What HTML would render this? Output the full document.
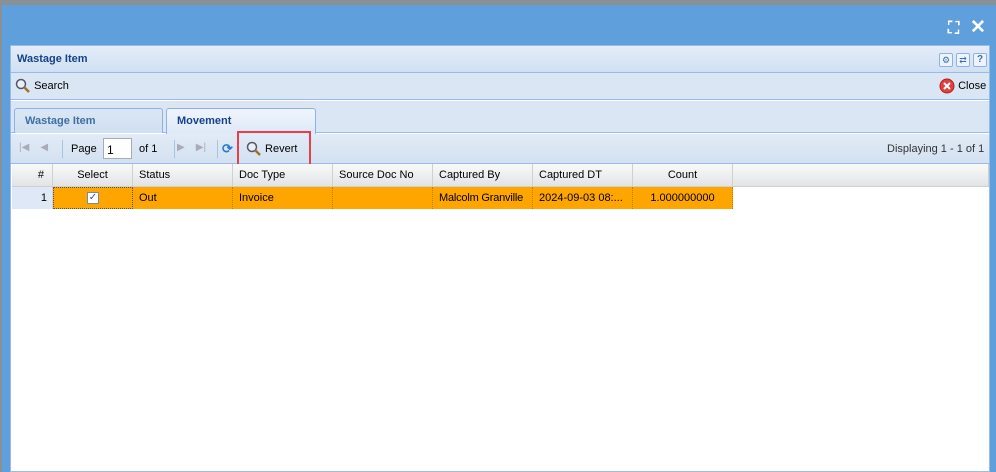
<!DOCTYPE html>
<html><head><style>
*{margin:0;padding:0;box-sizing:border-box}
body{width:996px;height:472px;overflow:hidden;background:#8a9098;font-family:"Liberation Sans",sans-serif;font-size:11px;position:relative}
.abs{position:absolute}
.win{left:2px;top:5px;width:994px;height:467px;background:#5fa0dc}
.inner{left:10px;top:45px;width:980px;height:427px;background:#fff;border:1px solid #99bbe8}
.hdr{left:0;top:0;width:978px;height:27px;background:linear-gradient(#e4edf8,#d0e0f3);border-bottom:1px solid #99bbe8;color:#15428b;font-weight:bold;font-size:11px;padding:7px 6px}
.tb{left:0;top:27px;width:978px;height:27px;background:#dae6f4;border-bottom:1px solid #99bbe8}
.tabs{left:0;top:55px;width:978px;height:32px;background:#dae6f4;border-bottom:1px solid #99bbe8}
.tab{top:7px;height:25px;border:1px solid #8db2e3;border-bottom:none;border-radius:3px 3px 0 0;font-weight:bold;color:#15428b;padding:6px 10px}
.pg{left:0;top:88px;width:978px;height:30px;background:linear-gradient(#e2ebf6,#d3e1f1);border-bottom:1px solid #99bbe8}
.gh{top:118px;height:23px;background:linear-gradient(#f9f9f9,#e3e4e6);border-right:1px solid #d0d0d0;border-bottom:1px solid #d0d0d0;padding:5px 6px;color:#000;white-space:nowrap}
.gr{top:141px;height:22px;background:#ffa500;border-right:1px dotted #c08000;padding:5px 6px;color:#000;white-space:nowrap;overflow:hidden}
.ic{display:inline-block;vertical-align:middle}
</style></head><body>
<div class="abs win"></div>
<div class="abs" style="left:948px;top:20px;color:#fff;font-size:16px;font-weight:bold">⛶</div>
<div class="abs" style="left:970px;top:16px;color:#fff;font-size:19px;font-weight:bold">✕</div>
<div class="abs inner">
 <div class="abs hdr">Wastage Item</div>
 <div class="abs" style="left:928px;top:7px;display:flex;gap:3px">
  <span style="width:14px;height:14px;border:1px solid #8db2e3;border-radius:2px;background:#eef4fb;font-size:9px;color:#3a6fb5;text-align:center;line-height:12px">⚙</span>
  <span style="width:14px;height:14px;border:1px solid #8db2e3;border-radius:2px;background:#eef4fb;font-size:9px;color:#3a6fb5;text-align:center;line-height:12px">⇄</span>
  <span style="width:14px;height:14px;border:1px solid #8db2e3;border-radius:2px;background:#eef4fb;font-size:10px;font-weight:bold;color:#3a6fb5;text-align:center;line-height:12px">?</span>
 </div>
 <div class="abs tb">
  <div class="abs" style="left:4px;top:5px"><svg class="ic" width="16" height="16"><circle cx="6" cy="6" r="4.5" fill="#e8f0fa" stroke="#556" stroke-width="1.5"/><line x1="9" y1="9" x2="14" y2="14" stroke="#a07030" stroke-width="2.5"/></svg> <span style="font-size:11px">Search</span></div>
  <div class="abs" style="left:928px;top:5px"><svg class="ic" width="16" height="16"><circle cx="8" cy="8" r="7" fill="#e04040" stroke="#b02020"/><path d="M5 5L11 11M11 5L5 11" stroke="#fff" stroke-width="2"/></svg> <span>Close</span></div>
 </div>
 <div class="abs tabs">
  <div class="abs tab" style="left:3px;width:149px;background:linear-gradient(#dbe7f5,#cfdff2);color:#416da3">Wastage Item</div>
  <div class="abs tab" style="left:155px;width:150px;background:linear-gradient(#f0f5fc,#dde9f7);height:26px">Movement</div>
 </div>
 <div class="abs pg">
  <div class="abs" style="left:8px;top:8px;color:#aab;font-size:10px">|◀&nbsp;&nbsp;&nbsp;&nbsp;◀</div>
  <div class="abs" style="left:51px;top:6px;width:1px;height:18px;background:#a9c3e3"></div>
  <div class="abs" style="left:60px;top:9px">Page</div>
  <div class="abs" style="left:92px;top:4px;width:29px;height:21px;background:#fff;border:1px solid #a5acb5;padding:4px 3px;font-size:12px">1</div>
  <div class="abs" style="left:128px;top:9px">of 1</div>
  <div class="abs" style="left:163px;top:6px;width:1px;height:18px;background:#a9c3e3"></div>
  <div class="abs" style="left:166px;top:8px;color:#aab;font-size:10px">▶&nbsp;&nbsp;&nbsp;&nbsp;▶|</div>
  <div class="abs" style="left:206px;top:6px;width:1px;height:18px;background:#a9c3e3"></div>
  <div class="abs" style="left:211px;top:7px;color:#2a7ad0;font-size:13px;font-weight:bold">⟳</div>
  <div class="abs" style="left:226px;top:-3px;width:74px;height:35px;border:2px solid #e8404a"></div>
  <div class="abs" style="left:235px;top:7px"><svg class="ic" width="16" height="16"><circle cx="6" cy="6" r="4.5" fill="#e8f0fa" stroke="#556" stroke-width="1.5"/><line x1="9" y1="9" x2="14" y2="14" stroke="#a07030" stroke-width="2.5"/></svg> Revert</div>
  <div class="abs" style="left:876px;top:9px;color:#333">Displaying 1 - 1 of 1</div>
 </div>
 <div class="abs gh" style="left:1px;width:41px;text-align:right;padding-right:8px">#</div>
 <div class="abs gh" style="left:42px;width:80px;text-align:center">Select</div>
 <div class="abs gh" style="left:122px;width:100px">Status</div>
 <div class="abs gh" style="left:222px;width:100px">Doc Type</div>
 <div class="abs gh" style="left:322px;width:100px">Source Doc No</div>
 <div class="abs gh" style="left:422px;width:100px">Captured By</div>
 <div class="abs gh" style="left:522px;width:100px">Captured DT</div>
 <div class="abs gh" style="left:622px;width:100px;text-align:center">Count</div>
 <div class="abs gh" style="left:722px;width:256px"></div>
 <div class="abs gr" style="left:1px;width:41px;background:#dfe8f6;text-align:right;padding-right:5px;border-right:1px solid #c8d4e4">1</div>
 <div class="abs gr" style="left:42px;width:80px;border:1px dotted #555;text-align:center;padding-top:3px"><span style="display:inline-block;width:12px;height:12px;background:#fff;border:1px solid #7a8aa0;font-size:10px;line-height:10px;color:#3050a0">✓</span></div>
 <div class="abs gr" style="left:122px;width:100px">Out</div>
 <div class="abs gr" style="left:222px;width:100px">Invoice</div>
 <div class="abs gr" style="left:322px;width:100px"></div>
 <div class="abs gr" style="left:422px;width:100px;padding:5px 4px 5px 6px;letter-spacing:-0.2px">Malcolm Granville</div>
 <div class="abs gr" style="left:522px;width:100px">2024-09-03 08:...</div>
 <div class="abs gr" style="left:622px;width:100px;text-align:center">1.000000000</div>
</div>
</body></html>
